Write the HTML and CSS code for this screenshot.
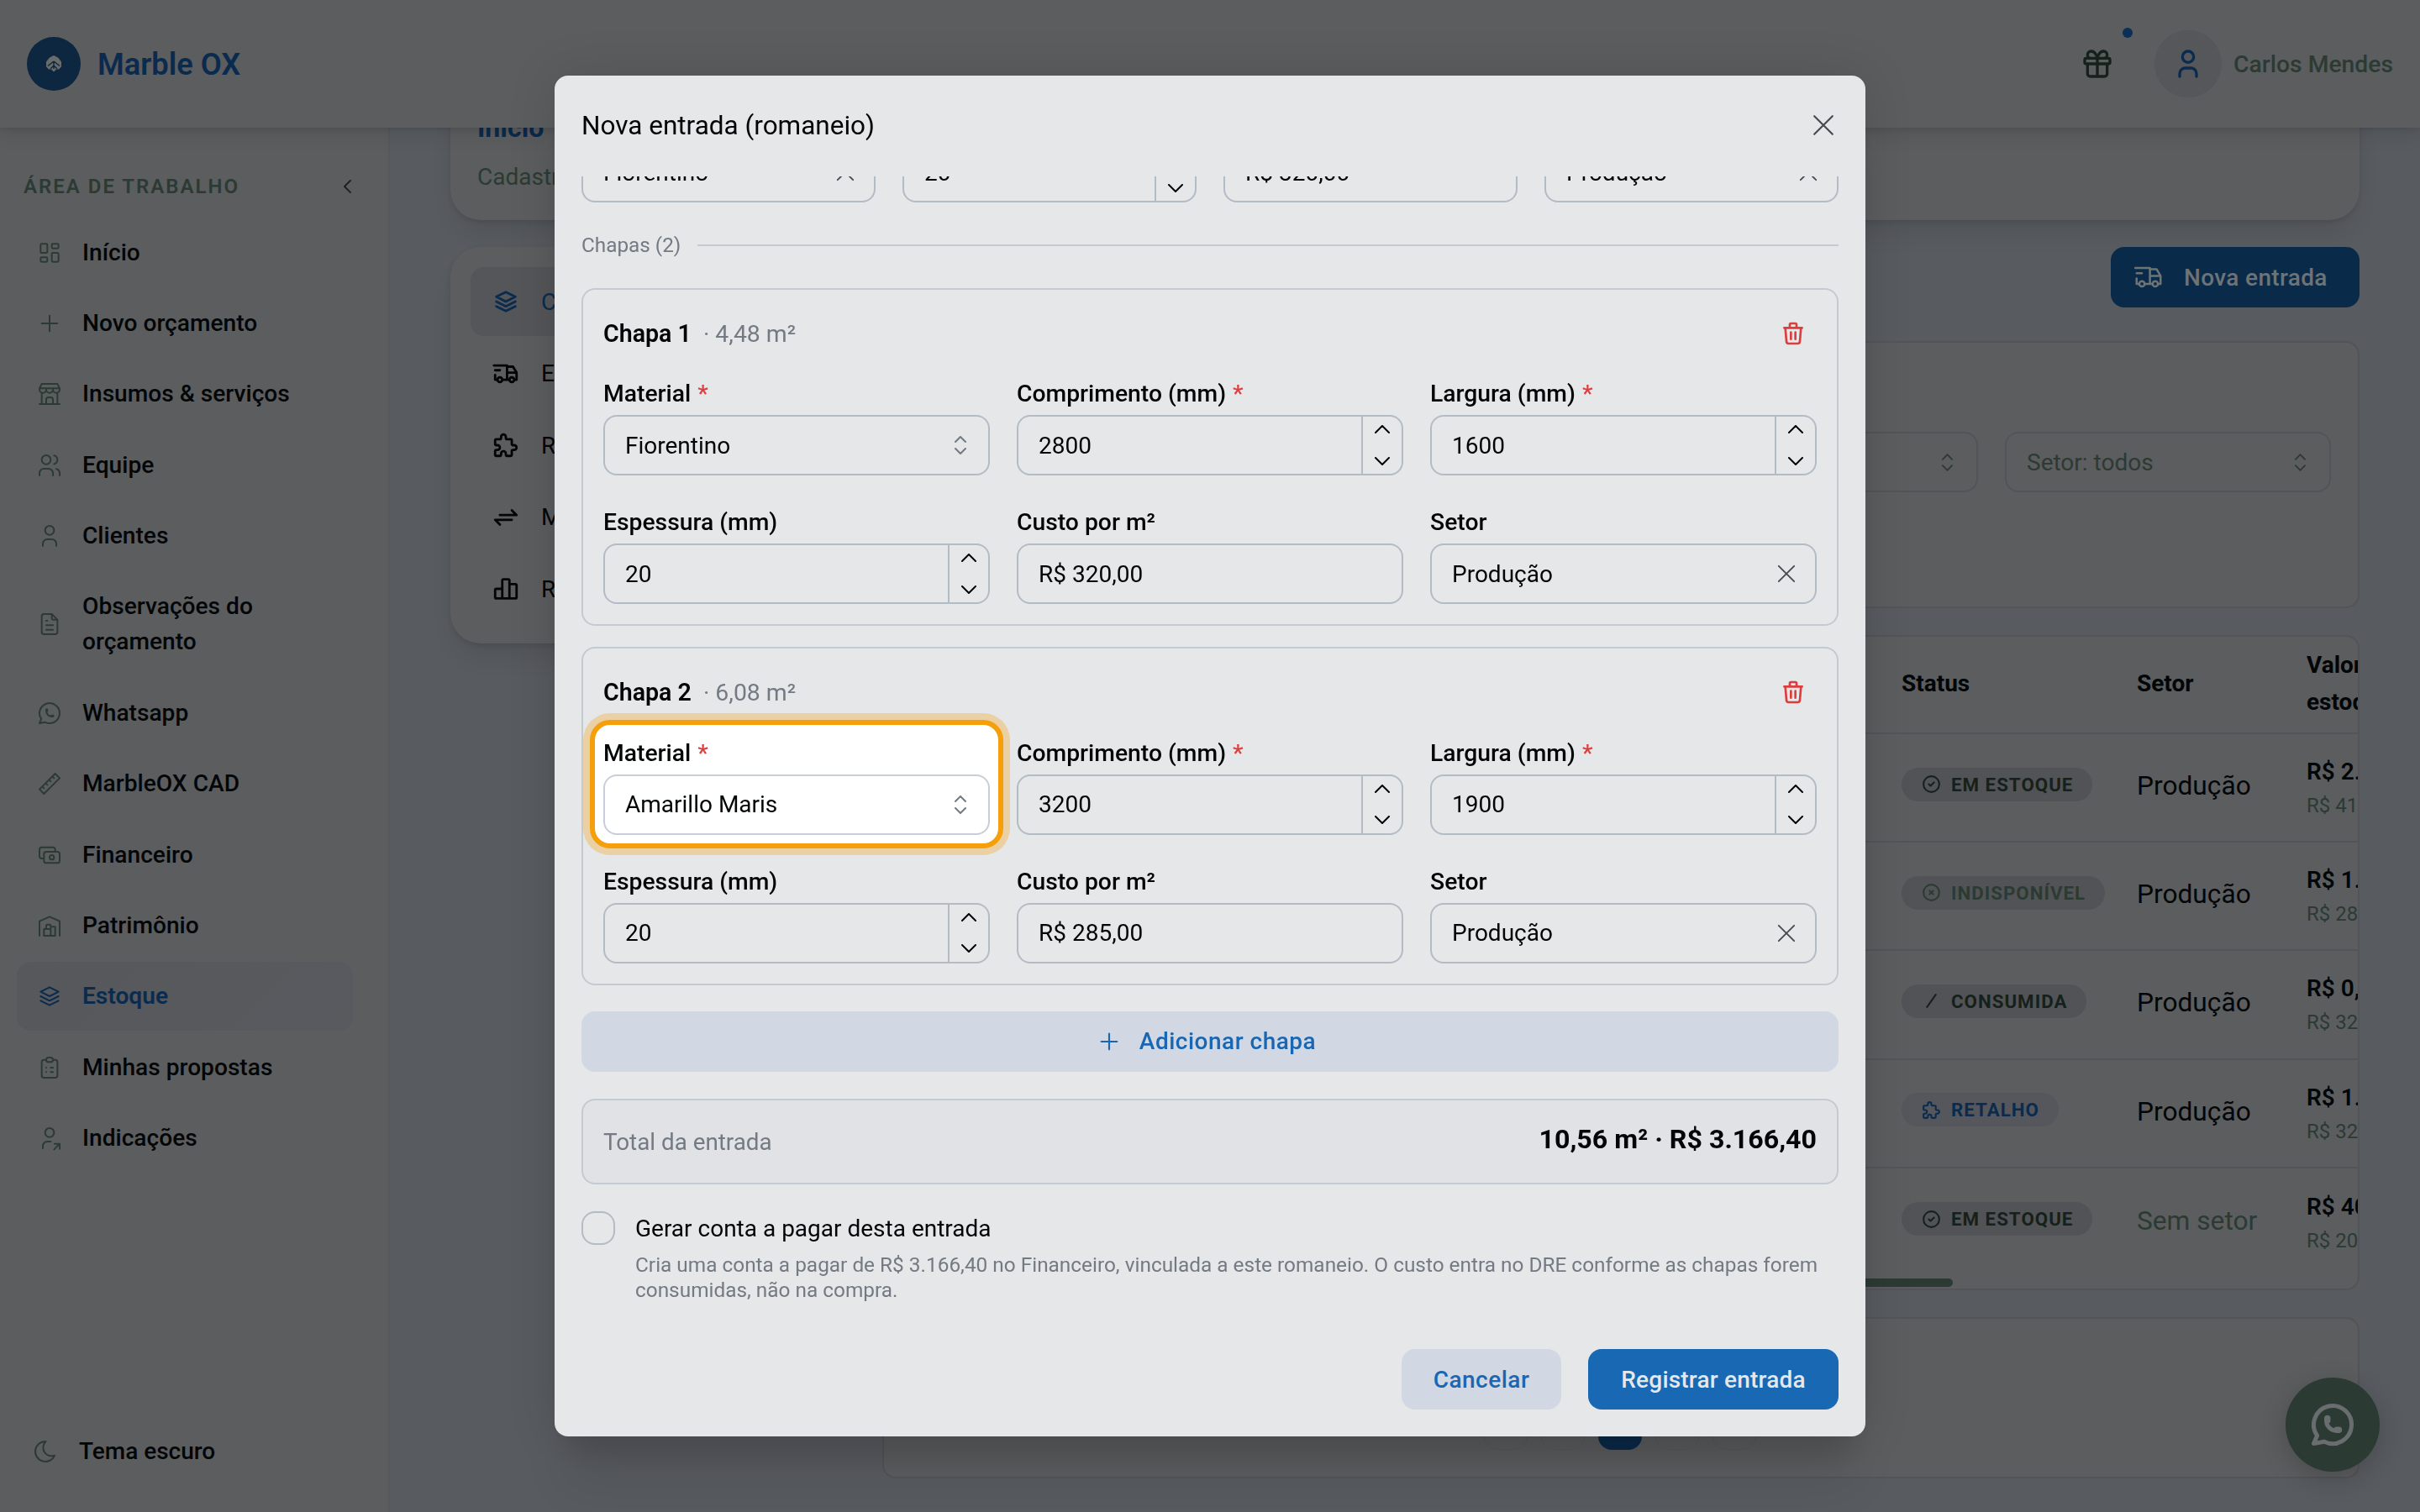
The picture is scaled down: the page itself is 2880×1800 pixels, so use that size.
FILE: index.html
```html
<!DOCTYPE html>
<html lang="pt-BR">
<head>
  <meta charset="UTF-8" />
  <meta name="viewport" content="width=device-width, initial-scale=1" />
  <title>Marble OX - Estoque</title>
  <link rel="stylesheet" href="styles.css">
</head>
<body>

  <!-- Icon set -->
  <svg class="sprite" xmlns="http://www.w3.org/2000/svg">
    <symbol id="i-dashboard" viewBox="0 0 24 24"><path d="M5 4h4a1 1 0 0 1 1 1v6a1 1 0 0 1-1 1H5a1 1 0 0 1-1-1V5a1 1 0 0 1 1-1M5 16h4a1 1 0 0 1 1 1v2a1 1 0 0 1-1 1H5a1 1 0 0 1-1-1v-2a1 1 0 0 1 1-1M15 12h4a1 1 0 0 1 1 1v6a1 1 0 0 1-1 1h-4a1 1 0 0 1-1-1v-6a1 1 0 0 1 1-1M15 4h4a1 1 0 0 1 1 1v2a1 1 0 0 1-1 1h-4a1 1 0 0 1-1-1V5a1 1 0 0 1 1-1"/></symbol>
    <symbol id="i-plus" viewBox="0 0 24 24"><path d="M12 5v14M5 12h14"/></symbol>
    <symbol id="i-store" viewBox="0 0 24 24"><path d="M3 21h18M3 7v1a3 3 0 0 0 6 0V7m0 1a3 3 0 0 0 6 0V7m0 1a3 3 0 0 0 6 0V7H3l2-4h14l2 4M5 21V10.85M19 21V10.85M9 21v-4a2 2 0 0 1 2-2h2a2 2 0 0 1 2 2v4"/></symbol>
    <symbol id="i-users" viewBox="0 0 24 24"><path d="M5 7a4 4 0 1 0 8 0a4 4 0 1 0-8 0M3 21v-2a4 4 0 0 1 4-4h4a4 4 0 0 1 4 4v2M16 3.13a4 4 0 0 1 0 7.75M21 21v-2a4 4 0 0 0-3-3.85"/></symbol>
    <symbol id="i-user" viewBox="0 0 24 24"><path d="M8 7a4 4 0 1 0 8 0a4 4 0 0 0-8 0M6 21v-2a4 4 0 0 1 4-4h4a4 4 0 0 1 4 4v2"/></symbol>
    <symbol id="i-file" viewBox="0 0 24 24"><path d="M14 3v4a1 1 0 0 0 1 1h4M17 21H7a2 2 0 0 1-2-2V5a2 2 0 0 1 2-2h7l5 5v11a2 2 0 0 1-2 2zM9 9h1M9 13h6M9 17h6"/></symbol>
    <symbol id="i-whatsapp" viewBox="0 0 24 24"><path d="M3 21l1.65-3.8a9 9 0 1 1 3.4 2.9L3 21M9 10a.5.5 0 0 0 1 0V9a.5.5 0 0 0-1 0v1a5 5 0 0 0 5 5h1a.5.5 0 0 0 0-1h-1a.5.5 0 0 0 0 1"/></symbol>
    <symbol id="i-ruler" viewBox="0 0 24 24"><path d="M17 3l4 4L7 21l-4-4zM16 7l-1.500-1.500M13 10l-1.500-1.500M10 13l-1.500-1.500M7 16l-1.500-1.500"/></symbol>
    <symbol id="i-cash" viewBox="0 0 24 24"><path d="M7 11a2 2 0 0 1 2-2h10a2 2 0 0 1 2 2v6a2 2 0 0 1-2 2H9a2 2 0 0 1-2-2zM12 14a2 2 0 1 0 4 0a2 2 0 1 0-4 0M17 9V7a2 2 0 0 0-2-2H5a2 2 0 0 0-2 2v6a2 2 0 0 0 2 2h2"/></symbol>
    <symbol id="i-warehouse" viewBox="0 0 24 24"><path d="M3 21V8l9-4l9 4v13M13 13h4v8H7v-6h6M13 21v-9a1 1 0 0 0-1-1h-2a1 1 0 0 0-1 1v3"/></symbol>
    <symbol id="i-stack" viewBox="0 0 24 24"><path d="M12 4L4 8l8 4l8-4l-8-4M4 12l8 4l8-4M4 16l8 4l8-4"/></symbol>
    <symbol id="i-clipboard" viewBox="0 0 24 24"><path d="M9 5H7a2 2 0 0 0-2 2v12a2 2 0 0 0 2 2h10a2 2 0 0 0 2-2V7a2 2 0 0 0-2-2h-2M9 5a2 2 0 0 1 2-2h2a2 2 0 0 1 2 2a2 2 0 0 1-2 2h-2a2 2 0 0 1-2-2zM9 12h.01M13 12h2M9 16h.01M13 16h2"/></symbol>
    <symbol id="i-user-share" viewBox="0 0 24 24"><path d="M8 7a4 4 0 1 0 8 0a4 4 0 0 0-8 0M6 21v-2a4 4 0 0 1 4-4h3M16 22l5-5M21 21.500V17h-4.500"/></symbol>
    <symbol id="i-moon" viewBox="0 0 24 24"><path d="M12 3h.393a7.500 7.500 0 0 0 7.920 12.446A9 9 0 1 1 12 2.992z"/></symbol>
    <symbol id="i-truck" viewBox="0 0 24 24"><path d="M5 17a2 2 0 1 0 4 0a2 2 0 1 0-4 0M15 17a2 2 0 1 0 4 0a2 2 0 1 0-4 0M5 17H3v-4M2 5h11v12m-4 0h6m4 0h2v-6h-8m0-5h5l3 5M3 9h4"/></symbol>
    <symbol id="i-puzzle" viewBox="0 0 24 24"><path d="M4 7h3a1 1 0 0 0 1-1V5a2 2 0 0 1 4 0v1a1 1 0 0 0 1 1h3a1 1 0 0 1 1 1v3a1 1 0 0 0 1 1h1a2 2 0 0 1 0 4h-1a1 1 0 0 0-1 1v3a1 1 0 0 1-1 1h-3a1 1 0 0 1-1-1v-1a2 2 0 0 0-4 0v1a1 1 0 0 1-1 1H4a1 1 0 0 1-1-1v-3a1 1 0 0 1 1-1h1a2 2 0 0 0 0-4H4a1 1 0 0 1-1-1V8a1 1 0 0 1 1-1"/></symbol>
    <symbol id="i-exchange" viewBox="0 0 24 24"><path d="M7 10h14l-4-4M17 14H3l4 4"/></symbol>
    <symbol id="i-chart" viewBox="0 0 24 24"><path d="M3 13a1 1 0 0 1 1-1h4a1 1 0 0 1 1 1v6a1 1 0 0 1-1 1H4a1 1 0 0 1-1-1zM15 9a1 1 0 0 1 1-1h4a1 1 0 0 1 1 1v10a1 1 0 0 1-1 1h-4a1 1 0 0 1-1-1zM9 5a1 1 0 0 1 1-1h4a1 1 0 0 1 1 1v14a1 1 0 0 1-1 1h-4a1 1 0 0 1-1-1zM4 20h14"/></symbol>
    <symbol id="i-gift" viewBox="0 0 24 24"><path d="M3 9a1 1 0 0 1 1-1h16a1 1 0 0 1 1 1v2a1 1 0 0 1-1 1H4a1 1 0 0 1-1-1zM12 8v13M19 12v7a2 2 0 0 1-2 2H7a2 2 0 0 1-2-2v-7M7.500 8a2.500 2.500 0 0 1 0-5A4.800 8 0 0 1 12 8a4.800 8 0 0 1 4.500-5a2.500 2.500 0 0 1 0 5"/></symbol>
    <symbol id="i-check" viewBox="0 0 24 24"><path d="M3 12a9 9 0 1 0 18 0a9 9 0 1 0-18 0M9 12l2 2l4-4"/></symbol>
    <symbol id="i-circle-x" viewBox="0 0 24 24"><path d="M3 12a9 9 0 1 0 18 0a9 9 0 1 0-18 0M10 10l4 4m0-4l-4 4"/></symbol>
    <symbol id="i-slash" viewBox="0 0 24 24"><path d="M17 5L7 19"/></symbol>
    <symbol id="i-trash" viewBox="0 0 24 24"><path d="M4 7h16M10 11v6M14 11v6M5 7l1 12a2 2 0 0 0 2 2h8a2 2 0 0 0 2-2l1-12M9 7V4a1 1 0 0 1 1-1h4a1 1 0 0 1 1 1v3"/></symbol>
    <symbol id="i-x" viewBox="0 0 24 24"><path d="M2 2l20 20M22 2L2 22"/></symbol>
    <symbol id="i-left" viewBox="0 0 10 18"><path d="M9 1L1 9l8 8"/></symbol>
    <symbol id="i-up" viewBox="0 0 18 10"><path d="M1 9l8-8l8 8"/></symbol>
    <symbol id="i-down" viewBox="0 0 18 10"><path d="M1 1l8 8l8-8"/></symbol>
    <symbol id="i-selector" viewBox="0 0 14 22"><path d="M1 7l6-6l6 6M1 15l6 6l6-6"/></symbol>
  </svg>

  <header class="topbar">
    <div class="brand">
      <span class="brand-logo">
        <svg viewBox="0 0 18 20"><path class="leaf" d="M9 0l5 2.500l4 5v6l-3 3h-3l-3 3l-3-3H3l-3-3v-6l4-5z"/><path class="vein" d="M9 7v9M9 7L2 12.500M9 7l7 5.500M9 12l-4 4M9 12l4 4"/></svg>
      </span>
      <span class="brand-name">Marble OX</span>
    </div>
    <div class="account">
      <span class="gift"><svg class="icon"><use href="#i-gift"/></svg><i class="dot"></i></span>
      <span class="avatar"><svg class="icon"><use href="#i-user"/></svg></span>
      <span class="account-name">Carlos Mendes</span>
    </div>
  </header>

  <div class="layout">
    <nav class="sidebar">
      <div class="sidebar-title">
        <span>ÁREA DE TRABALHO</span>
        <svg class="icon"><use href="#i-left"/></svg>
      </div>
      <ul class="nav">
        <li><svg class="icon"><use href="#i-dashboard"/></svg><span>Início</span></li>
        <li><svg class="icon"><use href="#i-plus"/></svg><span>Novo orçamento</span></li>
        <li><svg class="icon"><use href="#i-store"/></svg><span>Insumos &amp; serviços</span></li>
        <li><svg class="icon"><use href="#i-users"/></svg><span>Equipe</span></li>
        <li><svg class="icon"><use href="#i-user"/></svg><span>Clientes</span></li>
        <li><svg class="icon"><use href="#i-file"/></svg><span>Observações do<br>orçamento</span></li>
        <li><svg class="icon"><use href="#i-whatsapp"/></svg><span>Whatsapp</span></li>
        <li><svg class="icon"><use href="#i-ruler"/></svg><span>MarbleOX CAD</span></li>
        <li><svg class="icon"><use href="#i-cash"/></svg><span>Financeiro</span></li>
        <li><svg class="icon"><use href="#i-warehouse"/></svg><span>Patrimônio</span></li>
        <li class="active"><svg class="icon"><use href="#i-stack"/></svg><span>Estoque</span></li>
        <li><svg class="icon"><use href="#i-clipboard"/></svg><span>Minhas propostas</span></li>
        <li><svg class="icon"><use href="#i-user-share"/></svg><span>Indicações</span></li>
      </ul>
      <div class="theme">
        <svg class="icon"><use href="#i-moon"/></svg><span>Tema escuro</span>
      </div>
    </nav>

    <main class="main">
      <section class="page-head">
        <h1>Início</h1>
        <p>Cadastro</p>
      </section>
      <div class="columns">
        <ul class="tabs">
          <li class="active"><svg class="icon"><use href="#i-stack"/></svg>Chapas</li>
          <li><svg class="icon"><use href="#i-truck"/></svg>Entradas</li>
          <li><svg class="icon"><use href="#i-puzzle"/></svg>Retalhos</li>
          <li><svg class="icon"><use href="#i-exchange"/></svg>Movimentos</li>
          <li><svg class="icon"><use href="#i-chart"/></svg>Relatórios</li>
        </ul>

        <div class="content">
          <button class="new-entry"><svg class="icon"><use href="#i-truck"/></svg>Nova entrada</button>

          <section class="panel filters">
            <div class="filter"><svg class="icon"><use href="#i-selector"/></svg></div>
            <div class="filter"><span>Setor: todos</span><svg class="icon"><use href="#i-selector"/></svg></div>
          </section>

          <section class="panel stock">
            <div class="stock-row stock-head">
              <div></div><div>Status</div><div>Setor</div><div>Valor em<br>estoque</div>
            </div>
            <div class="stock-row">
              <div></div>
              <div><span class="badge"><svg class="icon"><use href="#i-check"/></svg>EM ESTOQUE</span></div>
              <div class="sector">Produção</div>
              <div><b>R$ 2.</b><small>R$ 41</small></div>
            </div>
            <div class="stock-row">
              <div></div>
              <div><span class="badge muted"><svg class="icon"><use href="#i-circle-x"/></svg>INDISPONÍVEL</span></div>
              <div class="sector">Produção</div>
              <div><b>R$ 1.</b><small>R$ 28</small></div>
            </div>
            <div class="stock-row">
              <div></div>
              <div><span class="badge"><svg class="icon"><use href="#i-slash"/></svg>CONSUMIDA</span></div>
              <div class="sector">Produção</div>
              <div><b>R$ 0,</b><small>R$ 32</small></div>
            </div>
            <div class="stock-row">
              <div></div>
              <div><span class="badge blue"><svg class="icon"><use href="#i-puzzle"/></svg>RETALHO</span></div>
              <div class="sector">Produção</div>
              <div><b>R$ 1.</b><small>R$ 32</small></div>
            </div>
            <div class="stock-row">
              <div></div>
              <div><span class="badge"><svg class="icon"><use href="#i-check"/></svg>EM ESTOQUE</span></div>
              <div class="sector none">Sem setor</div>
              <div><b>R$ 40</b><small>R$ 20</small></div>
            </div>
            <div class="scrollbar"></div>
          </section>

          <section class="panel pager">
            <i></i><i></i><i class="current"></i><i></i><i></i>
          </section>
        </div>
      </div>
    </main>
  </div>

  <div class="fab"><svg class="icon"><use href="#i-whatsapp"/></svg></div>

  <div class="overlay">
    <div class="modal" role="dialog">
      <div class="modal-head">
        <h2>Nova entrada (romaneio)</h2>
        <svg class="icon"><use href="#i-x"/></svg>
      </div>

      <div class="modal-body">
        <div class="defaults">
          <div class="input"><span>Fiorentino</span><svg class="icon clear"><use href="#i-x"/></svg></div>
          <div class="input number"><span>20</span><div class="steps"><svg class="icon"><use href="#i-up"/></svg><svg class="icon"><use href="#i-down"/></svg></div></div>
          <div class="input"><span>R$ 320,00</span></div>
          <div class="input"><span>Produção</span><svg class="icon clear"><use href="#i-x"/></svg></div>
        </div>

        <div class="divider">Chapas (2)</div>

        <section class="slab">
          <div class="slab-head">
            <div><b>Chapa 1</b><span>· 4,48 m²</span></div>
            <svg class="icon"><use href="#i-trash"/></svg>
          </div>
          <div class="fields">
            <div class="field">
              <label>Material <em>*</em></label>
              <div class="input"><span>Fiorentino</span><svg class="icon selector"><use href="#i-selector"/></svg></div>
            </div>
            <div class="field">
              <label>Comprimento (mm) <em>*</em></label>
              <div class="input number"><span>2800</span><div class="steps"><svg class="icon"><use href="#i-up"/></svg><svg class="icon"><use href="#i-down"/></svg></div></div>
            </div>
            <div class="field">
              <label>Largura (mm) <em>*</em></label>
              <div class="input number"><span>1600</span><div class="steps"><svg class="icon"><use href="#i-up"/></svg><svg class="icon"><use href="#i-down"/></svg></div></div>
            </div>
            <div class="field">
              <label>Espessura (mm)</label>
              <div class="input number"><span>20</span><div class="steps"><svg class="icon"><use href="#i-up"/></svg><svg class="icon"><use href="#i-down"/></svg></div></div>
            </div>
            <div class="field">
              <label>Custo por m²</label>
              <div class="input"><span>R$ 320,00</span></div>
            </div>
            <div class="field">
              <label>Setor</label>
              <div class="input"><span>Produção</span><svg class="icon clear"><use href="#i-x"/></svg></div>
            </div>
          </div>
        </section>

        <section class="slab">
          <div class="slab-head">
            <div><b>Chapa 2</b><span>· 6,08 m²</span></div>
            <svg class="icon"><use href="#i-trash"/></svg>
          </div>
          <div class="fields">
            <div class="field spotlight">
              <label>Material <em>*</em></label>
              <div class="input"><span>Amarillo Maris</span><svg class="icon selector"><use href="#i-selector"/></svg></div>
            </div>
            <div class="field">
              <label>Comprimento (mm) <em>*</em></label>
              <div class="input number"><span>3200</span><div class="steps"><svg class="icon"><use href="#i-up"/></svg><svg class="icon"><use href="#i-down"/></svg></div></div>
            </div>
            <div class="field">
              <label>Largura (mm) <em>*</em></label>
              <div class="input number"><span>1900</span><div class="steps"><svg class="icon"><use href="#i-up"/></svg><svg class="icon"><use href="#i-down"/></svg></div></div>
            </div>
            <div class="field">
              <label>Espessura (mm)</label>
              <div class="input number"><span>20</span><div class="steps"><svg class="icon"><use href="#i-up"/></svg><svg class="icon"><use href="#i-down"/></svg></div></div>
            </div>
            <div class="field">
              <label>Custo por m²</label>
              <div class="input"><span>R$ 285,00</span></div>
            </div>
            <div class="field">
              <label>Setor</label>
              <div class="input"><span>Produção</span><svg class="icon clear"><use href="#i-x"/></svg></div>
            </div>
          </div>
        </section>

        <button class="btn light add"><svg class="icon"><use href="#i-plus"/></svg>Adicionar chapa</button>

        <div class="total">
          <span>Total da entrada</span>
          <b>10,56 m² · R$ 3.166,40</b>
        </div>

        <div class="bill">
          <i class="checkbox"></i>
          <div>
            <div class="bill-label">Gerar conta a pagar desta entrada</div>
            <p>Cria uma conta a pagar de R$ 3.166,40 no Financeiro, vinculada a este romaneio. O custo entra no DRE conforme as chapas forem<br>consumidas, não na compra.</p>
          </div>
        </div>
      </div>

      <div class="modal-foot">
        <button class="btn light">Cancelar</button>
        <button class="btn primary">Registrar entrada</button>
      </div>
    </div>
  </div>

</body>
</html>
```

FILE: styles.css
```css
* {
  box-sizing: border-box;
}
body {
  margin: 0;
  height: 1800px;
  overflow: hidden;
  font-family: Roboto, "Liberation Sans", sans-serif;
  font-size: 28px;
  color: #030607;
  background: #585b60;
  display: flex;
  flex-direction: column;
}
h1, h2, p, ul {
  margin: 0;
  padding: 0;
}
ul {
  list-style: none;
}
button {
  border: none;
  font: inherit;
}
.sprite {
  display: none;
}
.icon {
  display: block;
  flex: none;
  width: 32px;
  height: 32px;
  fill: none;
  stroke: currentColor;
  stroke-width: 2;
  stroke-linecap: round;
  stroke-linejoin: round;
  overflow: visible;
}

/* Top bar */
.topbar {
  flex: none;
  height: 152px;
  padding: 0 32px;
  display: flex;
  align-items: center;
  justify-content: space-between;
  background: #5c5d5f;
  box-shadow: 0 2px 6px rgba(0, 0, 0, 0.1), 0 10px 20px rgba(0, 0, 0, 0.08);
  position: relative;
  z-index: 1;
}
.brand {
  display: flex;
  align-items: center;
  gap: 20px;
}
.brand-logo {
  width: 64px;
  height: 64px;
  border-radius: 50%;
  background: #0d2740;
  display: flex;
  align-items: center;
  justify-content: center;
}
.brand-logo svg {
  width: 18px;
  height: 20px;
}
.leaf {
  fill: #6a6c6c;
}
.vein {
  fill: none;
  stroke: #0d2740;
  stroke-width: 1.4;
}
.brand-name {
  font-size: 36.3px;
  font-weight: 600;
  color: #0b2b4e;
}
.account {
  display: flex;
  align-items: center;
}
.gift {
  position: relative;
  margin-right: 48px;
  color: #16211b;
}
.gift .icon,
.avatar .icon {
  width: 40px;
  height: 40px;
}
.dot {
  position: absolute;
  right: -22px;
  top: -23px;
  width: 12px;
  height: 12px;
  border-radius: 50%;
  background: #0b2f58;
}
.avatar {
  width: 80px;
  height: 80px;
  margin-right: 14px;
  border-radius: 50%;
  background: #56575b;
  color: #0b2b4e;
  display: flex;
  align-items: center;
  justify-content: center;
}
.account-name {
  font-size: 28.3px;
  font-weight: 500;
  color: #2b3b33;
}

/* Sidebar */
.layout {
  flex: 1;
  min-height: 0;
  display: flex;
}
.sidebar {
  flex: none;
  width: 464px;
  padding: 46px 42px 46px 20px;
  display: flex;
  flex-direction: column;
  background: #5c5d5f;
  border-right: 2px solid #57585a;
}
.sidebar-title {
  height: 48px;
  padding: 0 2px 0 8px;
  display: flex;
  align-items: center;
  justify-content: space-between;
  font-size: 24px;
  font-weight: 600;
  letter-spacing: 2px;
  color: #2b3b33;
}
.sidebar-title .icon {
  width: 9px;
  height: 16px;
  color: #16211b;
}
.nav {
  margin-top: 13.5px;
  display: flex;
  flex-direction: column;
  gap: 2.4px;
}
.nav li {
  min-height: 82px;
  padding: 20px 23px;
  border-radius: 16px;
  display: flex;
  align-items: center;
  gap: 23px;
  line-height: 42px;
  font-size: 28.15px;
  font-weight: 500;
}
.nav .icon,
.theme .icon {
  color: #2b3b33;
  stroke-width: 1.5;
}
.nav .active {
  background: linear-gradient(135deg, #56585b, #585a5f);
  color: #0b2b4e;
  font-weight: 600;
}
.nav .active .icon {
  color: #0b2b4e;
}
.theme {
  margin-top: auto;
  padding-left: 18px;
  display: flex;
  align-items: center;
  gap: 24px;
  line-height: 52px;
  font-weight: 500;
}

/* Main area */
.main {
  flex: 1;
  min-width: 0;
  padding: 0 72px;
  overflow: hidden;
}
.page-head {
  height: 162px;
  margin-top: -52px;
  padding: 30px 32px;
  border-radius: 36px;
  background: #5c5d5f;
  box-shadow: 0 2px 6px rgba(0, 0, 0, 0.1), 0 20px 30px -8px rgba(0, 0, 0, 0.1);
}
.page-head h1 {
  font-size: 32px;
  line-height: 44px;
  color: #0b2b4e;
}
.page-head p {
  margin-top: 15px;
  line-height: 44px;
  color: #2b3b33;
}
.columns {
  margin-top: 32px;
  display: flex;
  align-items: flex-start;
  gap: 32px;
}
.tabs {
  flex: none;
  width: 482px;
  height: 472px;
  padding: 24px;
  border-radius: 36px;
  background: #5c5d5f;
  box-shadow: 0 2px 6px rgba(0, 0, 0, 0.1), 0 20px 30px -8px rgba(0, 0, 0, 0.1);
  display: flex;
  flex-direction: column;
  gap: 3.5px;
}
.tabs li {
  height: 82px;
  padding: 0 25px;
  border-radius: 16px;
  display: flex;
  align-items: center;
  gap: 25px;
}
.tabs .icon {
  width: 34px;
  height: 34px;
}
.tabs .active {
  background: #555659;
  color: #0b2b4e;
}
.content {
  flex: 1;
  min-width: 0;
  display: flex;
  flex-direction: column;
  gap: 32px;
}
.new-entry {
  align-self: flex-end;
  width: 296px;
  height: 72px;
  margin-bottom: 8px;
  padding: 0 26px;
  border-radius: 16px;
  background: #0a2a4a;
  color: #6e7375;
  font-weight: 500;
  letter-spacing: 0.35px;
  white-space: nowrap;
  display: flex;
  align-items: center;
  gap: 23px;
}
.new-entry .icon {
  width: 38px;
  height: 38px;
  stroke-width: 1.6;
}
.panel {
  border: 2px solid #535458;
  border-radius: 16px;
  background: #5c5d5f;
}
.filters {
  height: 318px;
  padding: 106px 32px 0;
  display: flex;
  justify-content: flex-end;
  gap: 32px;
}
.filter {
  width: 388px;
  height: 72px;
  padding: 0 28px 0 24px;
  border: 2px solid #525457;
  border-radius: 16px;
  display: flex;
  align-items: center;
  justify-content: space-between;
  color: #2d3a34;
}
.filter:first-child {
  justify-content: flex-end;
}
.filter .icon {
  width: 13px;
  height: 21px;
}
.stock {
  height: 780px;
  overflow: hidden;
}
.stock-row {
  height: 129.2px;
  display: grid;
  grid-template-columns: 1211px 280px 202px 200px;
  align-items: center;
  border-bottom: 2px solid #535458;
}
.stock-row:nth-child(6) {
  border-bottom: none;
}
.stock-head {
  height: 116px;
  padding-bottom: 3px;
  font-weight: 700;
  line-height: 43.4px;
}
.badge {
  display: inline-flex;
  align-items: center;
  gap: 11px;
  height: 40px;
  margin-bottom: 8px;
  padding: 0 23px;
  border-radius: 20px;
  background: #525356;
  font-size: 22.3px;
  font-weight: 700;
  letter-spacing: 1px;
  color: #16211b;
  vertical-align: middle;
}
.badge .icon {
  width: 25px;
  height: 25px;
}
.badge.muted {
  color: #2b3b33;
}
.badge.blue {
  background: #56575c;
  color: #0b2b4e;
}
.sector {
  margin-bottom: 4px;
  font-size: 31.7px;
}
.sector.none {
  color: #2b3b33;
}
.stock-row b,
.stock-row small {
  display: block;
  white-space: nowrap;
  line-height: 43px;
}
.stock-row b {
  font-weight: 600;
}
.stock-row small {
  font-size: 24px;
  line-height: 38px;
  color: #2b3b33;
}
.scrollbar {
  width: 900px;
  height: 10px;
  margin: 2px 0 0 372px;
  border-radius: 5px;
  background: #2b3b33;
}
.pager {
  height: 192px;
  padding: 104px 0 0 714px;
  display: flex;
  gap: 16px;
}
.pager i {
  width: 52px;
  height: 52px;
  border-radius: 16px;
  border: 1px solid #58595b;
}
.pager .current {
  border: none;
  background: #0a2a4a;
}
.fab {
  position: absolute;
  left: 2720px;
  top: 1640px;
  width: 112px;
  height: 112px;
  border-radius: 50%;
  background: #2b3a32;
  color: #6a6d6f;
  box-shadow: 0 8px 32px rgba(0, 0, 0, 0.2);
  display: flex;
  align-items: center;
  justify-content: center;
}
.fab .icon {
  width: 60px;
  height: 60px;
}

/* Modal */
.overlay {
  position: fixed;
  inset: 0;
  z-index: 2;
  display: flex;
  align-items: center;
  justify-content: center;
}
.modal {
  width: 1560px;
  height: 1620px;
  border-radius: 16px;
  background: #e5e7e9;
  box-shadow: 0 0 60px rgba(0, 0, 0, 0.12), 0 34px 34px -14px rgba(0, 0, 0, 0.08), 0 72px 56px -14px rgba(0, 0, 0, 0.08);
  display: flex;
  flex-direction: column;
}
.modal-head {
  flex: none;
  height: 120px;
  padding: 0 37px 2px 32px;
  display: flex;
  align-items: center;
  justify-content: space-between;
}
.modal-head h2 {
  font-size: 31.5px;
  font-weight: 400;
}
.modal-head .icon {
  width: 26px;
  height: 26px;
  color: #464b50;
}
.modal-body {
  flex: 1;
  min-height: 0;
  padding: 0 32px;
  overflow: hidden;
}
.defaults {
  margin-top: -41px;
  display: grid;
  grid-template-columns: repeat(4, 1fr);
  gap: 32px;
}
.input {
  height: 72px;
  padding: 0 23.5px 0 24px;
  border: 2px solid #b3bbc5;
  border-radius: 16px;
  display: flex;
  align-items: center;
  justify-content: space-between;
}
.input .clear {
  width: 22px;
  height: 22px;
  color: #464b50;
}
.input .selector {
  width: 14px;
  height: 22px;
  margin-right: 3px;
  color: #737a83;
}
.input.number {
  padding-right: 0;
}
.steps {
  width: 48px;
  height: 100%;
  padding: 10px 0 10.5px;
  border-left: 2px solid #b3bbc5;
  display: flex;
  flex-direction: column;
  align-items: center;
  justify-content: space-between;
}
.steps .icon {
  width: 18px;
  height: 10px;
}
.divider {
  margin: 31px 0 31.5px;
  height: 39px;
  display: flex;
  align-items: center;
  gap: 20px;
  font-size: 24.3px;
  color: #737a83;
}
.divider::after {
  content: "";
  flex: 1;
  height: 2px;
  background: #c4cad2;
}
.slab {
  height: 402.5px;
  padding: 24px;
  margin-bottom: 25px;
  border: 2px solid #c4cad2;
  border-radius: 16px;
}
.slab-head {
  height: 56px;
  margin-bottom: 20.5px;
  padding-right: 12px;
  display: flex;
  align-items: center;
  justify-content: space-between;
}
.slab-head b {
  font-size: 28.6px;
  font-weight: 600;
  margin-right: 14px;
}
.slab-head span {
  font-size: 28.4px;
  color: #737a83;
}
.slab-head .icon {
  color: #dc3e3e;
}
.fields {
  display: grid;
  grid-template-columns: repeat(3, 1fr);
  gap: 32px;
}
.field label {
  display: block;
  height: 45px;
  margin-bottom: 4px;
  line-height: 47px;
  font-size: 28.3px;
  font-weight: 500;
}
.field em {
  margin-left: 1px;
  font-style: normal;
  color: #dc3e3e;
}
.spotlight {
  position: relative;
  z-index: 0;
}
.spotlight::before {
  content: "";
  position: absolute;
  inset: -16px;
  z-index: -1;
  border: 6px solid #f59f0a;
  border-radius: 24px;
  background: #fff;
  box-shadow: 0 0 0 8px #ebd0a4;
}
.spotlight .input {
  border-color: #c8ced8;
}
.btn {
  height: 72px;
  border-radius: 16px;
  display: flex;
  align-items: center;
  justify-content: center;
  font-weight: 500;
  letter-spacing: 0.2px;
}
.btn.light {
  background: #d1d8e4;
  color: #1967b3;
  letter-spacing: 0.5px;
}
.btn.primary {
  background: #1868b4;
  color: #e5e7e9;
}
.add {
  width: 100%;
  margin-top: 31px;
  padding-right: 16px;
  gap: 20px;
}
.add .icon {
  stroke-width: 1.6;
}
.total {
  height: 102px;
  margin-top: 32px;
  padding: 0 24px;
  border: 2px solid #c4cad2;
  border-radius: 16px;
  background: #e0e2e5;
  display: flex;
  align-items: center;
  justify-content: space-between;
  color: #737a83;
}
.total span {
  margin-top: 2px;
  font-size: 27.8px;
}
.total b {
  margin-bottom: 5px;
  font-size: 32.2px;
  color: #030607;
}
.bill {
  margin-top: 32px;
  display: flex;
  gap: 24px;
}
.checkbox {
  flex: none;
  width: 40px;
  height: 40px;
  border: 2px solid #b3bbc5;
  border-radius: 16px;
}
.bill-label {
  line-height: 41px;
}
.bill p {
  margin-top: 8px;
  font-size: 24.38px;
  line-height: 30px;
  color: #737a83;
  white-space: nowrap;
}
.modal-foot {
  flex: none;
  padding: 0 32px 32px;
  display: flex;
  justify-content: flex-end;
  gap: 32px;
}
.modal-foot .light {
  width: 190px;
}
.modal-foot .primary {
  width: 298px;
}
```
